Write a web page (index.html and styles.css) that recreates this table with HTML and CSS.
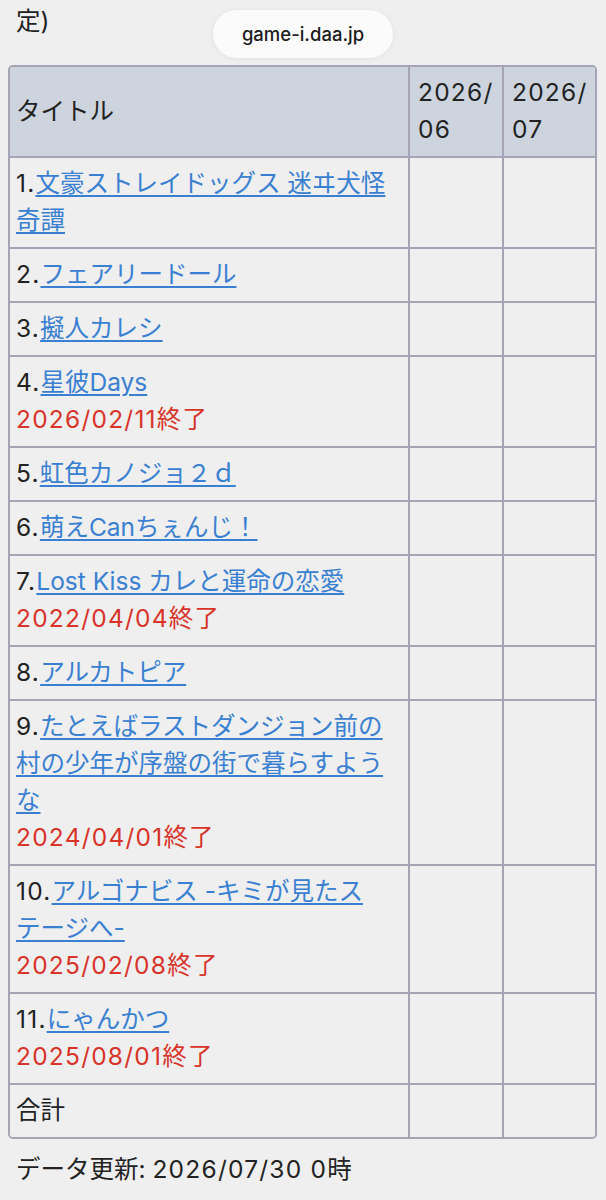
FILE: index.html
```html
<!DOCTYPE html>
<html lang="ja">
<head>
<meta charset="utf-8">
<title>game-i.daa.jp</title>
<link rel="stylesheet" href="styles.css">
</head>
<body>
<div class="page">
  <p class="lead">定)</p>
  <div class="table-wrap">
    <table class="rank">
      <thead>
        <tr>
          <th class="col-title">タイトル</th>
          <th class="col-month num">2026/<br>06</th>
          <th class="col-month num">2026/<br>07</th>
        </tr>
      </thead>
      <tbody>
        <tr><td><span class="num">1.</span><a href="#">文豪ストレイドッグス 迷ヰ犬怪奇譚</a></td><td></td><td></td></tr>
        <tr><td><span class="num">2.</span><a href="#">フェアリードール</a></td><td></td><td></td></tr>
        <tr><td><span class="num">3.</span><a href="#">擬人カレシ</a></td><td></td><td></td></tr>
        <tr><td><span class="num">4.</span><a href="#">星彼Days</a><br><span class="end num">2026/02/11終了</span></td><td></td><td></td></tr>
        <tr><td><span class="num">5.</span><a href="#">虹色カノジョ２ｄ</a></td><td></td><td></td></tr>
        <tr><td><span class="num">6.</span><a href="#">萌えCanちぇんじ！</a></td><td></td><td></td></tr>
        <tr><td><span class="num">7.</span><a href="#">Lost Kiss カレと運命の恋愛</a><br><span class="end num">2022/04/04終了</span></td><td></td><td></td></tr>
        <tr><td><span class="num">8.</span><a href="#">アルカトピア</a></td><td></td><td></td></tr>
        <tr><td><span class="num">9.</span><a href="#">たとえばラストダンジョン前の村の少年が序盤の街で暮らすような</a><br><span class="end num">2024/04/01終了</span></td><td></td><td></td></tr>
        <tr><td><span class="num">10.</span><a href="#">アルゴナビス -キミが見たステージへ-</a><br><span class="end num">2025/02/08終了</span></td><td></td><td></td></tr>
        <tr><td><span class="num">11.</span><a href="#">にゃんかつ</a><br><span class="end num">2025/08/01終了</span></td><td></td><td></td></tr>
        <tr><td>合計</td><td></td><td></td></tr>
      </tbody>
    </table>
  </div>
  <p class="updated">データ更新: <span class="num">2026/07/30 0</span>時</p>
</div>
<div class="url-pill">game-i.daa.jp</div>
</body>
</html>
```

FILE: styles.css
```css
html, body {
  margin: 0;
  padding: 0;
  background: #efefef;
}

body {
  font-family: "Inter", "Noto Sans CJK JP", sans-serif;
  font-size: 24.5px;
  line-height: 37px;
  color: #222;
  line-break: strict;
}

.page {
  padding: 3px 8px 20px 8px;
}

.lead {
  margin: 0 0 25px 8px;
}

.num {
  letter-spacing: 0.05em;
}

.table-wrap {
  border: 2px solid #a4a4b4;
  border-radius: 5px;
  overflow: hidden;
  width: 585px;
}

.rank {
  width: 100%;
  border-collapse: collapse;
  table-layout: fixed;
}

.rank th,
.rank td {
  padding: 7px 8px 8px 8px;
  text-align: left;
  vertical-align: top;
  font-weight: normal;
  border-right: 2px solid #a4a4b4;
  border-bottom: 2px solid #a4a4b4;
  background: #efefef;
}

.rank tr > :first-child {
  padding-left: 6px;
  padding-right: 10px;
}

.rank th {
  background: #cdd4dd;
}

.rank tr > :last-child {
  border-right: none;
}

.rank tbody tr:last-child td {
  border-bottom: none;
}

.rank .col-title {
  width: 382px;
  vertical-align: middle;
}

.rank .col-month {
  width: 76px;
}

.rank .col-month:last-child {
  width: 77px;
}

.rank a {
  color: #3a80d2;
  text-decoration: underline;
  text-decoration-thickness: 1.5px;
  text-underline-offset: 3px;
}

.end {
  color: #d8342a;
}

.updated {
  margin: 12px 0 0 8px;
}

.url-pill {
  position: absolute;
  top: 10px;
  left: 213px;
  width: 180px;
  height: 48px;
  border-radius: 24px;
  background: #fbfbfb;
  box-shadow: 0 1px 6px rgba(0, 0, 0, 0.06);
  font-family: "Inter", "Noto Sans", sans-serif;
  font-size: 18.5px;
  font-weight: 500;
  line-height: 48px;
  text-align: center;
  color: #1c1c1c;
}
```
